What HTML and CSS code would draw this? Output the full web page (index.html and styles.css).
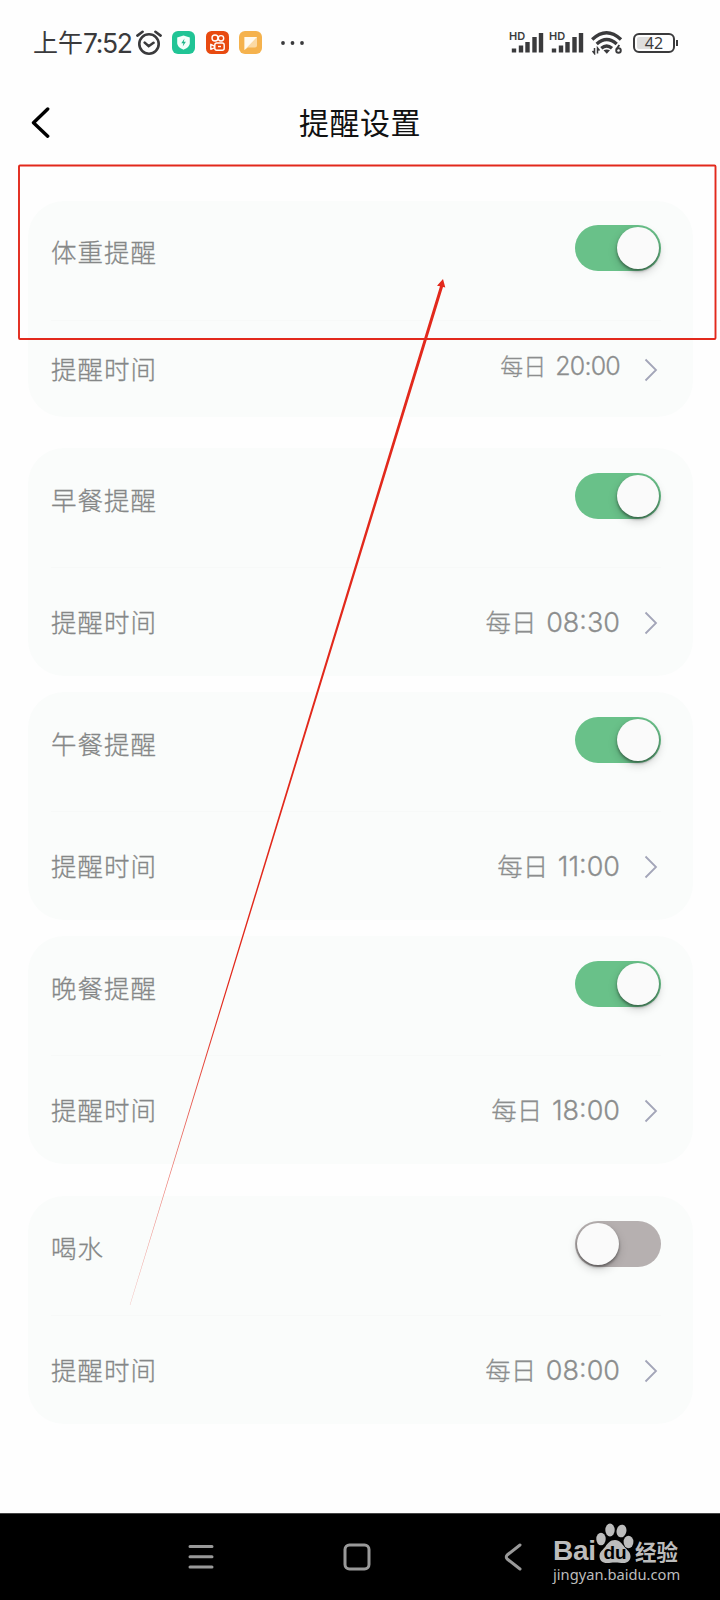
FILE: index.html
```html
<!DOCTYPE html>
<html lang="zh-CN">
<head>
    <meta charset="UTF-8">
    <meta name="viewport" content="width=device-width, initial-scale=1.0">
    <title>提醒设置</title>
    <link rel="stylesheet" href="styles.css">
</head>
<body>

    <div class="status-bar">
        <span class="status-day">上午</span><span class="status-time">7:52</span>
        <svg class="alarm" width="26" height="26" viewBox="0 0 26 26" fill="none" stroke="#3a3a3c" stroke-width="2.6" stroke-linecap="round">
            <circle cx="13" cy="14" r="9.7"/>
            <path d="M8.7 12.6l4 3.6 4.8-3.4M1.4 5.6l5.2-3.8M24.6 5.6l-5.2-3.8"/>
        </svg>
        <svg class="app" width="23" height="23" viewBox="0 0 23 23">
            <rect width="23" height="23" rx="6" fill="#20c495"/>
            <path d="M11.5 4.5l6.3 2v5.6c0 3-2.6 5.2-6.3 6.7-3.7-1.5-6.3-3.7-6.3-6.7V6.5z" fill="#f4fffb"/>
            <path d="M12.5 7.5l-3.2 4.7h2.1l-.7 3.3 3.2-4.7h-2.1z" fill="#20b68a"/>
        </svg>
        <svg class="app" width="23" height="23" viewBox="0 0 23 23">
            <rect width="23" height="23" rx="5.5" fill="#e84a10"/>
            <g fill="none" stroke="#fff" stroke-width="1.4" stroke-linejoin="round">
                <circle cx="9" cy="7" r="3"/>
                <circle cx="15" cy="7.3" r="2.7"/>
                <rect x="8.8" y="12" width="9.4" height="7.2" rx="2"/>
                <path d="M8.800 15.300l-4-2v5l4-1.600"/>
                <path d="M12 15.500h3" />
            </g>
        </svg>
        <svg class="app" width="23" height="23" viewBox="0 0 23 23">
            <rect width="23" height="23" rx="6" fill="#f5b24d"/>
            <path d="M5.500 6h12.500v8.500q0 2-2 2H9l-3.500 2.500z" fill="#fbd9a3"/>
            <path d="M5.500 6h12.500L5.500 19z" fill="#fffaf0"/>
        </svg>
        <svg class="dots" width="24" height="6" viewBox="0 0 24 6" fill="#3a3a3c">
            <circle cx="2" cy="3" r="1.900"/>
            <circle cx="11.500" cy="3" r="1.900"/>
            <circle cx="21" cy="3" r="1.900"/>
        </svg>

        <div class="status-right">
            <div class="signal">
                <span>HD</span>
                <svg width="33" height="21" viewBox="0 0 33 21" stroke="#3a3a3c" stroke-width="4.400">
                    <path d="M3 20.500v-4M10 20.500v-7M16.500 20.500v-10.500M23.500 20.500v-15.500M30 20.500V1"/>
                </svg>
            </div>
            <div class="signal">
                <span>HD</span>
                <svg width="33" height="21" viewBox="0 0 33 21" stroke="#3a3a3c" stroke-width="4.400">
                    <path d="M3 20.500v-4M10 20.500v-7M16.500 20.500v-10.500M23.500 20.500v-15.500M30 20.500V1"/>
                </svg>
            </div>
            <svg class="wifi" width="32" height="25" viewBox="0 0 32 25" fill="none" stroke="#3a3a3c">
                <path d="M1.200 9.500Q15.500-4 30 9.500M5.700 14q10-8.800 20 0M10.300 18.200q5.400-4.400 10.700 0" stroke-width="3.400"/>
                <path d="M12.500 20.200q3.200-1.500 6.500 0l-3.200 3.600z" fill="#3a3a3c" stroke="none"/>
                <path d="M3.500 18v5.500l-2-2.500M6.500 23.500V18l2 2.500" stroke-width="1.500"/>
                <circle cx="27.500" cy="20.500" r="2.300" stroke-width="1.900"/>
                <path d="M28.300 15l-3 4.500" stroke-width="1.900"/>
            </svg>
            <div class="battery"><span>42</span></div>
        </div>
    </div>

    <header>
        <svg class="back" width="19" height="32" viewBox="0 0 19 32" fill="none" stroke="#000" stroke-width="3.400" stroke-linecap="round" stroke-linejoin="round">
            <path d="M16.700 2L2.500 15.700l14.200 13.500"/>
        </svg>
        <h1>提醒设置</h1>
    </header>

    <main>
        <section class="card card-weight">
            <div class="row row-top">
                <span class="label">体重提醒</span>
                <div class="toggle on"><i></i></div>
            </div>
            <div class="row row-time">
                <span class="label">提醒时间</span>
                <span class="value">每日 <b>20:00</b></span>
                <svg class="arrow" width="14" height="24" viewBox="0 0 14 24"><path d="M1.500 1.500L12 12 1.500 22.500"/></svg>
            </div>
        </section>

        <section class="card">
            <div class="row row-top">
                <span class="label">早餐提醒</span>
                <div class="toggle on"><i></i></div>
            </div>
            <div class="row row-time">
                <span class="label">提醒时间</span>
                <span class="value">每日 <b>08:30</b></span>
                <svg class="arrow" width="14" height="24" viewBox="0 0 14 24"><path d="M1.500 1.500L12 12 1.500 22.500"/></svg>
            </div>
        </section>

        <section class="card">
            <div class="row row-top">
                <span class="label">午餐提醒</span>
                <div class="toggle on"><i></i></div>
            </div>
            <div class="row row-time">
                <span class="label">提醒时间</span>
                <span class="value">每日 <b>11:00</b></span>
                <svg class="arrow" width="14" height="24" viewBox="0 0 14 24"><path d="M1.500 1.500L12 12 1.500 22.500"/></svg>
            </div>
        </section>

        <section class="card">
            <div class="row row-top">
                <span class="label">晚餐提醒</span>
                <div class="toggle on"><i></i></div>
            </div>
            <div class="row row-time">
                <span class="label">提醒时间</span>
                <span class="value">每日 <b>18:00</b></span>
                <svg class="arrow" width="14" height="24" viewBox="0 0 14 24"><path d="M1.500 1.500L12 12 1.500 22.500"/></svg>
            </div>
        </section>

        <section class="card card-water">
            <div class="row row-top">
                <span class="label">喝水</span>
                <div class="toggle"><i></i></div>
            </div>
            <div class="row row-time">
                <span class="label">提醒时间</span>
                <span class="value">每日 <b>08:00</b></span>
                <svg class="arrow" width="14" height="24" viewBox="0 0 14 24"><path d="M1.500 1.500L12 12 1.500 22.500"/></svg>
            </div>
        </section>
    </main>

    <nav>
        <svg class="nav-menu" width="26" height="28" viewBox="0 0 26 28"><path d="M2 3.500h22M2 13.700h22M2 24h22"/></svg>
        <svg class="nav-home" width="28" height="28" viewBox="0 0 28 28"><rect x="2" y="2" width="24" height="24" rx="4.500"/></svg>
        <svg class="nav-back" width="18" height="28" viewBox="0 0 18 28"><path d="M16 2L3.500 11.700q-2.500 2.300 0 4.600L16 26"/></svg>
        <div class="brand">
            <div class="brand-top">
                <span class="bai">Bai</span>
                <div class="paw">
                    <svg width="38" height="41" viewBox="0 0 38 41" fill="#bcbcbc">
                        <ellipse cx="5" cy="16" rx="4.700" ry="6.300"/>
                        <ellipse cx="14" cy="7" rx="4.700" ry="6.500"/>
                        <ellipse cx="25.500" cy="8" rx="4.900" ry="6.400" transform="rotate(12 25.500 8)"/>
                        <ellipse cx="32.500" cy="19" rx="4.900" ry="6.200"/>
                        <path d="M19 17c5 0 7 4 9.500 7s6 5 6 9.500c0 4-3 6.500-7 6.500-3 0-5-.5-8.500-.5s-5 .5-8 .5c-4.500 0-7.500-2.500-7.500-7s4-6.500 6-9.500 4.500-6.500 9.500-6.500z"/>
                    </svg>
                    <span>du</span>
                </div>
                <span class="jy">经验</span>
            </div>
            <div class="url">jingyan.baidu.com</div>
        </div>
    </nav>

    <!-- red box and pointer over the first card -->
    <svg class="mark" width="720" height="1600" viewBox="0 0 720 1600">
        <defs>
            <linearGradient id="fade" gradientUnits="userSpaceOnUse" x1="443" y1="279" x2="130" y2="1305">
                <stop offset="0.700" stop-color="#e2291c"/>
                <stop offset="1" stop-color="#e2291c" stop-opacity="0.300"/>
            </linearGradient>
        </defs>
        <rect x="19" y="165.500" width="696.500" height="173.500" rx="1" fill="none" stroke="#e2291c" stroke-width="1.900"/>
        <path d="M443 279l2.300 8.500-2.300-.5L130.200 1305h-.4L440 286.300l-3-.6z" fill="url(#fade)"/>
    </svg>

</body>
</html>
```

FILE: styles.css
```css
* {
    margin: 0;
    padding: 0;
    box-sizing: border-box;
}

body {
    position: relative;
    width: 720px;
    height: 1600px;
    display: flex;
    flex-direction: column;
    background-color: #fefefe;
    font-family: "Noto Sans CJK SC", sans-serif;
    overflow: hidden;
}

svg {
    display: block;
    flex-shrink: 0;
}

.status-bar {
    height: 85px;
    display: flex;
    align-items: center;
    padding-left: 33px;
    color: #3a3a3c;
    line-height: 30px;
}

.status-day {
    font-size: 25px;
    margin-bottom: 3px;
}

.status-time {
    width: 49px;
    font-family: Inter, sans-serif;
    font-size: 26.5px;
    letter-spacing: -1.4px;
}

.alarm {
    margin: 0 10px 0 4px;
}

.app {
    margin-right: 10.5px;
}

.dots {
    margin-left: 8px;
}

.status-right {
    display: flex;
    align-items: center;
    margin-left: auto;
    padding-right: 45px;
}

.signal {
    display: grid;
    margin-right: 7px;
}

.signal > * {
    grid-area: 1 / 1;
}

.signal span {
    font-family: Inter, sans-serif;
    font-size: 11px;
    font-weight: 600;
    line-height: 9px;
    margin-left: -2px;
}

.wifi {
    margin-right: 1px;
}

.battery {
    position: relative;
    width: 42px;
    height: 20px;
    margin-left: 9px;
    border: 2px solid #3a3a3c;
    border-radius: 6px;
    background: linear-gradient(to right, #dedede 15px, #fefefe 15px);
    box-shadow: inset 0 0 0 2px #fefefe;
    text-align: center;
}

.battery span {
    display: block;
    font-family: "Noto Sans", sans-serif;
    font-size: 16px;
    line-height: 16px;
}

.battery::after {
    content: "";
    position: absolute;
    right: -5px;
    top: 5px;
    width: 2px;
    height: 6px;
    background-color: #3a3a3c;
}

header {
    height: 76px;
    display: grid;
    grid-template-columns: 31px 1fr 31px;
    align-items: center;
}

.back {
    grid-area: 1 / 2;
}

h1 {
    grid-area: 1 / 2;
    margin-bottom: 4px;
    text-align: center;
    font-size: 30px;
    font-weight: 400;
    line-height: 40px;
    letter-spacing: 0.5px;
    color: #111;
}

main {
    flex: 1;
    padding: 40px 27px 0 28px;
}

.card {
    height: 228px;
    margin-bottom: 16px;
    padding: 0 32px 0 23px;
    border-radius: 36px;
    background-color: #fafcfb;
}

.card-weight {
    height: 216px;
    margin-bottom: 31px;
}

.card-water {
    margin-top: 32px;
}

.row {
    display: flex;
    align-items: center;
    justify-content: space-between;
}

.row-top {
    height: 120px;
    padding-bottom: 23px;
    border-bottom: 1px solid #f7f9f8;
}

.card-weight .row-top {
    padding-bottom: 25px;
}

.row-time {
    height: 108px;
    padding-top: 1px;
}

.card-weight .row-time {
    height: 96px;
}

.label {
    font-size: 25.5px;
    font-weight: 300;
    letter-spacing: 1px;
    line-height: 36px;
    color: #858787;
    -webkit-text-stroke: 0.3px #858787;
}

.row-top .label {
    margin-top: 6px;
}

.row-time .label {
    margin-bottom: 4px;
}

.value {
    margin-left: auto;
    margin-bottom: 2px;
    font-size: 25.5px;
    font-weight: 300;
    line-height: 36px;
    word-spacing: 4px;
    color: #8c8e8e;
    -webkit-text-stroke: 0.3px #8c8e8e;
}

.value b {
    font-family: Inter, sans-serif;
    font-size: 27px;
    font-weight: 300;
}

.card-weight .value {
    margin-bottom: 8px;
    font-size: 23px;
}

.card-weight .value b {
    font-size: 25px;
    letter-spacing: -0.8px;
}

.arrow {
    margin: 0 3px 0 24px;
    fill: none;
    stroke: #a3a5b8;
    stroke-width: 1.8;
}

.toggle {
    width: 86px;
    height: 46px;
    padding: 1.5px 2px;
    border-radius: 23px;
    background-color: #b6b0b0;
    display: flex;
}

.toggle.on {
    justify-content: flex-end;
    background-color: #69c189;
}

.toggle i {
    width: 42px;
    height: 42px;
    border-radius: 50%;
    background-color: #fafafa;
    box-shadow: 0 2px 3px rgba(0, 0, 0, 0.4), 0 4px 10px rgba(0, 0, 0, 0.18);
}

nav {
    height: 87px;
    display: flex;
    align-items: center;
    padding-left: 188px;
    border-top: 1px solid #444;
    background-color: #000;
}

nav > svg {
    fill: none;
    stroke: #999;
    stroke-width: 3;
    stroke-linecap: round;
}

.nav-home {
    margin-left: 129px;
}

.nav-back {
    margin-left: 133px;
}

.brand {
    margin-left: 31px;
    margin-bottom: 8px;
    color: #bcbcbc;
    font-family: "Noto Sans", sans-serif;
}

.brand-top {
    display: flex;
    align-items: flex-end;
    height: 42px;
}

.bai {
    width: 43px;
    font-family: "Liberation Sans", sans-serif;
    font-size: 28px;
    font-weight: 700;
    line-height: 26px;
    letter-spacing: -0.3px;
}

.paw {
    display: grid;
}

.paw > * {
    grid-area: 1 / 1;
}

.paw span {
    align-self: end;
    text-align: center;
    font-family: "Liberation Sans", sans-serif;
    font-size: 19px;
    font-weight: 700;
    line-height: 22px;
    color: #000;
}

.jy {
    margin-left: 1px;
    font-family: "Noto Sans CJK SC", sans-serif;
    font-size: 21.5px;
    font-weight: 700;
    line-height: 26px;
}

.url {
    font-size: 14.7px;
    line-height: 20px;
}

.mark {
    position: absolute;
    left: 0;
    top: 0;
    pointer-events: none;
}
```
